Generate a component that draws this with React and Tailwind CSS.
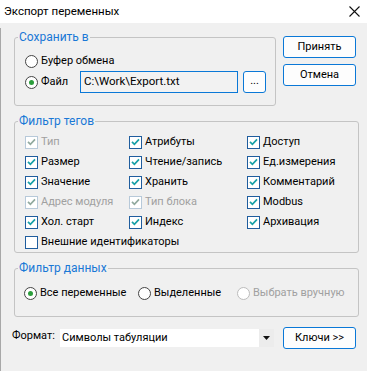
import React from "react";

const Radio = ({ checked, disabled, label }) => (
	<div className="flex items-center h-5">
		<span
			className={`w-[13px] h-[13px] rounded-full border bg-white flex items-center justify-center ${
				disabled ? "border-[#bcbcbc]" : "border-[#444]"
			}`}
		>
			{checked && <span className="w-[5px] h-[5px] rounded-full bg-[#2c9e3c]" />}
		</span>
		<span className={`ml-[3px] ${disabled ? "text-[#a0a0a0]" : "text-black"}`}>{label}</span>
	</div>
);

const Check = ({ checked = true, disabled, label }) => (
	<div className="flex items-center h-5">
		<span
			className={`w-[13px] h-[13px] border bg-white flex items-center justify-center ${
				disabled ? "border-[#b7c9d9]" : "border-[#1f5d9e]"
			}`}
		>
			{checked && (
				<svg width="9" height="8" viewBox="0 0 9 8">
					<path
						d="M1 3.8 L3.4 6.3 L8 1.4"
						fill="none"
						stroke={disabled ? "#92aa9f" : "#17a0a6"}
						strokeWidth="1.7"
					/>
				</svg>
			)}
		</span>
		<span className={`ml-[3px] ${disabled ? "text-[#a0a0a0]" : "text-black"}`}>{label}</span>
	</div>
);

const Group = ({ title, className, children }) => (
	<fieldset className={`border border-[#c4c4c4] rounded-[3px] p-0 min-w-0 ${className}`}>
		<legend className="ml-[3px] px-[1px] text-[12px] leading-[18px] text-[#1a78d6]">{title}</legend>
		{children}
	</fieldset>
);

const Btn = ({ children, className }) => (
	<button className={`h-[22px] w-[73px] border border-[#0a78d7] rounded-[3px] bg-[#fdfdfd] text-black ${className}`}>
		{children}
	</button>
);

export default function App() {
	return (
		<div className="w-[367px] h-[371px] bg-[#f0f0f0] font-['Roboto',sans-serif] text-[11px] text-black overflow-hidden">
			<div className="h-[23px] bg-white flex items-center justify-between pl-[4px] pr-[7px]">
				<span className="text-[11.5px]">Экспорт переменных</span>
				<svg width="11" height="11" viewBox="0 0 11 11">
					<path d="M0.5 0.5 L10.5 10.5 M10.5 0.5 L0.5 10.5" stroke="#111" strokeWidth="1.1" />
				</svg>
			</div>

			<div className="border-l border-[#a8a8a8] h-[348px]">
				<div className="pl-[13px] pr-[8px]">
					<div className="flex mt-[5px]">
						<Group title="Сохранить в" className="w-[262px] pb-[12px]">
							<div className="pl-[10px] mt-[5px]">
								<Radio label="Буфер обмена" />
								<div className="flex items-center h-[22px]">
									<div className="w-[55px]">
										<Radio checked label="Файл" />
									</div>
									<div className="w-[158px] h-[22px] border border-[#0a78d7] bg-[#f2f2f2] flex items-center pl-[3px] text-[11.5px]">
										C:\Work\Export.txt
									</div>
									<button className="ml-[5px] w-[23px] h-[22px] border border-[#0a78d7] rounded-[3px] bg-[#fdfdfd] leading-none pb-[4px]">
										...
									</button>
								</div>
							</div>
						</Group>
						<div className="ml-[7px] flex flex-col gap-[6px] mt-[8px]">
							<Btn>Принять</Btn>
							<Btn>Отмена</Btn>
						</div>
					</div>

					<Group title="Фильтр тегов" className="w-[345px] mt-[6px] pt-[2px]">
						<div className="grid grid-cols-[104px_118px_1fr] pl-[10px]">
							<Check disabled label="Тип" />
							<Check label="Атрибуты" />
							<Check label="Доступ" />
							<Check label="Размер" />
							<Check label="Чтение/запись" />
							<Check label="Ед.измерения" />
							<Check label="Значение" />
							<Check label="Хранить" />
							<Check label="Комментарий" />
							<Check disabled label="Адрес модуля" />
							<Check disabled label="Тип блока" />
							<Check label="Modbus" />
							<Check label="Хол. старт" />
							<Check label="Индекс" />
							<Check label="Архивация" />
							<div className="col-span-3">
								<Check checked={false} label="Внешние идентификаторы" />
							</div>
						</div>
					</Group>

					<Group title="Фильтр данных" className="w-[345px] mt-[6px] pt-[6px] pb-[13px]">
						<div className="flex pl-[9px]">
							<div className="w-[114px]">
								<Radio checked label="Все переменные" />
							</div>
							<div className="w-[99px]">
								<Radio label="Выделенные" />
							</div>
							<Radio disabled label="Выбрать вручную" />
						</div>
					</Group>
				</div>

				<div className="flex items-center mt-[10px] pl-[11px]">
					<span className="w-[48px] text-[11px] -mt-[3px]">Формат:</span>
					<div className="w-[214px] h-[18px] bg-white flex items-center">
						<span className="flex-1 pl-[2px]">Символы табуляции</span>
						<span className="w-[15px] h-[18px] bg-[#ececec] flex items-center justify-center">
							<svg width="7" height="4" viewBox="0 0 7 4">
								<path d="M0 0 H7 L3.5 4 Z" fill="#111" />
							</svg>
						</span>
					</div>
					<Btn className="ml-[9px] h-[21px]">Ключи &gt;&gt;</Btn>
				</div>
			</div>
		</div>
	);
}
